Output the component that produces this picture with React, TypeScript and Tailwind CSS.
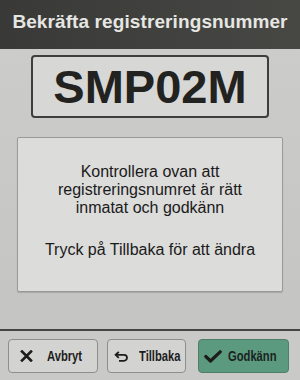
import React from 'react';

const XIcon = () => (
  <svg width="13" height="12" viewBox="0 0 13 12" className="shrink-0">
    <path d="M2 1.5 L11 10.5 M11 1.5 L2 10.5" stroke="#1c1c1c" strokeWidth="2.6" strokeLinecap="square" />
  </svg>
);

const BackIcon = () => (
  <svg width="15" height="11" viewBox="0 0 15 11" className="shrink-0">
    <path d="M4.8 0.8 L1.6 3.8 L4.8 6.8" fill="none" stroke="#1c1c1c" strokeWidth="1.8" strokeLinejoin="miter" />
    <path d="M2 3.8 H10 A3 3 0 0 1 10 9.8 H5" fill="none" stroke="#1c1c1c" strokeWidth="1.8" />
  </svg>
);

const CheckIcon = () => (
  <svg width="18" height="13" viewBox="0 0 18 13" className="shrink-0">
    <path d="M1.8 6.5 L6.5 11 L16.2 1.8" fill="none" stroke="#1c1c1c" strokeWidth="3.2" strokeLinecap="round" strokeLinejoin="round" />
  </svg>
);

const Label = ({ children }: { children: React.ReactNode }) => (
  <span className="inline-block origin-left scale-x-[0.8] whitespace-nowrap">{children}</span>
);

export default function App() {
  return (
    <div
      className="flex h-[380px] w-[300px] flex-col overflow-hidden bg-gradient-to-b from-[#cdcdcb] to-[#c3c3c1]"
      style={{ fontFamily: '"Liberation Sans", Arial, sans-serif' }}
    >
      <div className="flex h-[49px] shrink-0 items-center justify-center bg-gradient-to-r from-[#393937] to-[#474744] pb-[4px]">
        <h1 className="text-[19px] font-bold tracking-[0.1px] text-[#e6e6e3]">Bekräfta registreringsnummer</h1>
      </div>

      <div className="flex flex-1 flex-col">
        <div className="mx-[31px] mt-[6px] flex h-[63px] items-center justify-center rounded-[4px] border-2 border-[#3e3e3e] bg-[#d7d7d5]">
          <span className="text-[47px] leading-none font-bold text-[#222220]">SMP02M</span>
        </div>

        <div className="mx-[17px] mt-[19px] flex h-[155px] flex-col items-center justify-center rounded-[2px] border border-[#9a9a98] bg-[#dcdcda] text-center text-[16px] leading-[18px] text-[#1a1a1a] shadow-[0_1px_1px_rgba(0,0,0,0.15)]">
          <p className="mt-[-8px]">Kontrollera ovan att</p>
          <p>registreringsnumret är rätt</p>
          <p>inmatat och godkänn</p>
          <p className="mt-[24px]">Tryck på Tillbaka för att ändra</p>
        </div>
      </div>

      <div className="flex h-[51px] shrink-0 items-start border-t-2 border-[#454543] bg-[#c9c9c7] pl-[8px] pt-[8px]">
        <button className="flex h-[34px] w-[90px] items-center gap-[14px] rounded-[4px] border border-[#8e8e8c] bg-[#d3d3d1] pl-[11px] text-[14px] font-bold text-[#1c1c1c]">
          <XIcon />
          <Label>Avbryt</Label>
        </button>
        <button className="ml-[9px] flex h-[34px] w-[79px] items-center gap-[10px] rounded-[4px] border border-[#8e8e8c] bg-[#d3d3d1] pl-[6px] text-[14px] font-bold text-[#1c1c1c]">
          <BackIcon />
          <Label>Tillbaka</Label>
        </button>
        <button className="ml-[12px] flex h-[34px] w-[91px] items-center gap-[6px] rounded-[4px] border border-[#4f7e69] bg-[#5c9a80] pl-[5px] text-[14px] font-bold text-[#1a2520]">
          <CheckIcon />
          <Label>Godkänn</Label>
        </button>
      </div>
    </div>
  );
}
